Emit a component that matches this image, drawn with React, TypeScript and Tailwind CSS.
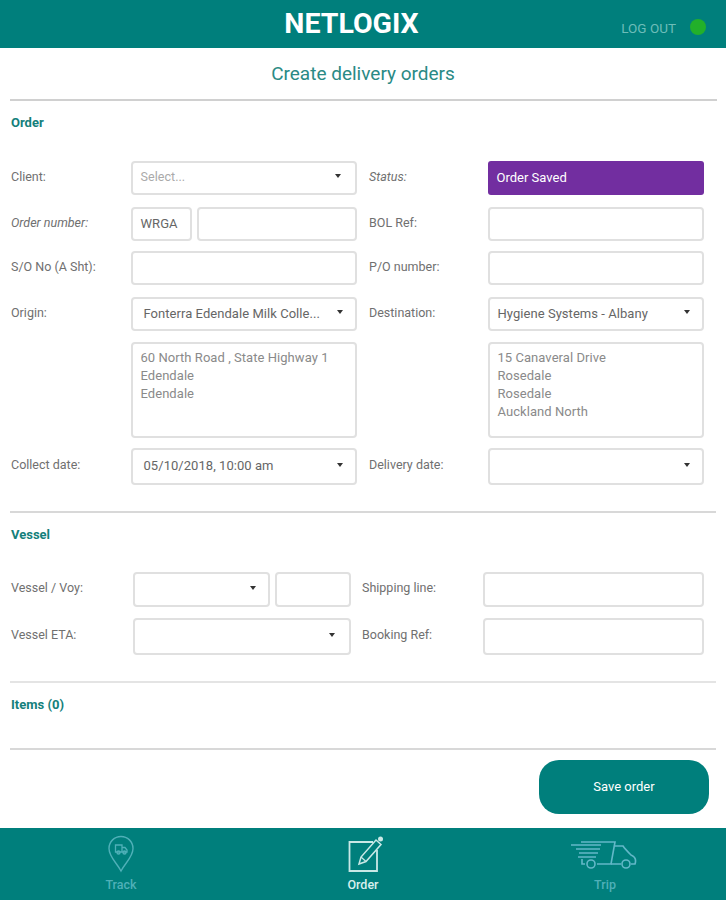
import type { ReactNode } from "react"

function Caret() {
  return <span className="ml-auto w-0 h-0 border-x-[3px] border-x-transparent border-t-[4px] border-t-[#333] -translate-y-[2px]" />
}

// no text colour here: each box passes its own so the classes don't fight
function Box({ className = "", children }: { className?: string; children?: ReactNode }) {
  return (
    <div className={`flex items-center border-2 border-[#e0e0e0] rounded-[4px] bg-white tracking-[0.05px] ${className}`}>
      {children}
    </div>
  )
}

function Label({ children, italic }: { children: ReactNode; italic?: boolean }) {
  return <div className={`text-[12.5px] text-[#707070] -translate-y-[1px] ${italic ? "italic" : ""}`}>{children}</div>
}

function Heading({ children }: { children: ReactNode }) {
  return <div className="text-[13px] leading-[16px] font-bold text-[#14807b]">{children}</div>
}

function Row({ className = "", left, right, leftLabel, rightLabel, leftItalic, rightItalic }: {
  className?: string
  left: ReactNode
  right: ReactNode
  leftLabel?: string
  rightLabel?: string
  leftItalic?: boolean
  rightItalic?: boolean
}) {
  return (
    <div className={`grid grid-cols-[119.5px_226.5px_130.5px_216px] items-center ${className}`}>
      <Label italic={leftItalic}>{leftLabel}</Label>
      <div className="flex h-full gap-[5px]">{left}</div>
      <div className="pl-[12px]"><Label italic={rightItalic}>{rightLabel}</Label></div>
      <div className="flex h-full">{right}</div>
    </div>
  )
}

function VesselRow({ className = "", label, rightLabel, left }: { className?: string; label: string; rightLabel: string; left: ReactNode }) {
  return (
    <div className={`grid grid-cols-[121.5px_218.5px_131.5px_221px] items-center ${className}`}>
      <Label>{label}</Label>
      <div className="flex h-full gap-[5px]">{left}</div>
      <div className="pl-[11px]"><Label>{rightLabel}</Label></div>
      <Box className="h-full" />
    </div>
  )
}

function TrackIcon() {
  return (
    <svg width="28" height="38" viewBox="0 0 28 38" fill="none" stroke="#4fb0b8" strokeWidth="1.4">
      <path d="M14 36 C10 28 2 22 2 13.5 C2 6.5 7.5 1.5 14 1.5 C20.5 1.5 26 6.5 26 13.5 C26 22 18 28 14 36 Z" />
      <path d="M8.5 10 H15 V17 H8.5 Z M15 12.5 H18 L20 15 V17 H15" strokeWidth="1.3" />
      <circle cx="11.5" cy="17.5" r="1.5" />
      <circle cx="17.5" cy="17.5" r="1.5" />
    </svg>
  )
}

function OrderIcon() {
  return (
    <svg width="38" height="38" viewBox="0 0 38 38" fill="none" stroke="#c9e8e6" strokeWidth="1.8">
      <path d="M26 7 H2.5 V36 H30 V15" />
      <path d="M12 29 L14 22 L29 5 L34 9.5 L19 26.5 Z" strokeWidth="1.5" />
      <path d="M14 22 L19 26.5" strokeWidth="1.2" />
      <circle cx="33.5" cy="4" r="2.5" fill="#c9e8e6" stroke="none" />
    </svg>
  )
}

function TripIcon() {
  return (
    <svg width="66" height="32" viewBox="0 0 66 32" fill="none" stroke="#63b8c8" strokeWidth="1.6">
      <path d="M0 7 H30 M5 11 H29 M8 15 H27 M7 19 H25" />
      <path d="M10 4 H44 L40 26 H26" />
      <path d="M11 21 V26 H14" />
      <path d="M44 8 H52 C54 11 56 13 60 17 C65 19 65 23 64 26 H60 M50 26 H40" />
      <circle cx="20" cy="26" r="4" />
      <circle cx="55" cy="26" r="4" />
    </svg>
  )
}

export default function App() {
  return (
    <div className="w-[726px] h-[900px] flex flex-col bg-white font-['Roboto',sans-serif] overflow-hidden">
      <header className="h-[48px] shrink-0 bg-[#007f7c] flex items-center relative">
        <div className="w-full text-center text-[28.5px] font-bold text-white pr-[23px]">NETLOGIX</div>
        <div className="absolute right-[20px] top-[17px] flex items-center">
          <span className="text-[13.5px] text-[#6dbdb9] mr-[14px] translate-y-[1px]">LOG OUT</span>
          <span className="w-[16px] h-[16px] rounded-full bg-[#22b02a]" />
        </div>
      </header>

      <div className="h-[51px] shrink-0 flex items-center justify-center text-[19px] text-[#2a8a85] translate-y-[1px]">Create delivery orders</div>

      <main className="flex-1 flex flex-col px-[10px]">
        <hr className="border-t-2 border-[#d0d0d0] w-[707px]" />

        <div className="pl-[1px]">
          <div className="mt-[14px]"><Heading>Order</Heading></div>

          <Row className="mt-[30px] h-[34px]" leftLabel="Client:" rightLabel="Status:" rightItalic
            left={<Box className="w-full pl-[8px] pr-[14px] text-[12.5px] text-[#aaa]"><span className="-translate-y-[1px]">Select...</span><Caret /></Box>}
            right={<div className="w-full flex items-center pl-[9px] rounded-[3px] bg-[#722ea0] text-[13px] text-white">Order Saved</div>} />

          <Row className="mt-[12px] h-[34px]" leftLabel="Order number:" leftItalic rightLabel="BOL Ref:"
            left={<><Box className="w-[61px] pl-[8px] text-[13px] text-[#666]">WRGA</Box><Box className="flex-1" /></>}
            right={<Box className="w-full" />} />

          <Row className="mt-[10px] h-[34px]" leftLabel="S/O No (A Sht):" rightLabel="P/O number:"
            left={<Box className="w-full" />}
            right={<Box className="w-full" />} />

          <Row className="mt-[12px] h-[34px]" leftLabel="Origin:" rightLabel="Destination:"
            left={<Box className="w-full pl-[11px] pr-[12px] text-[13px] text-[#666]">Fonterra Edendale Milk Colle...<Caret /></Box>}
            right={<Box className="w-full pl-[8px] pr-[12px] text-[13px] text-[#666]">Hygiene Systems - Albany<Caret /></Box>} />

          <Row className="mt-[11px] h-[96px]"
            left={<Box className="w-full items-start pl-[8px] pt-[5px] text-[13px] leading-[18px] text-[#8a8a8a]"><div>60 North Road , State Highway 1<br />Edendale<br />Edendale</div></Box>}
            right={<Box className="w-full items-start pl-[8px] pt-[5px] text-[13px] leading-[18px] text-[#8a8a8a]"><div>15 Canaveral Drive<br />Rosedale<br />Rosedale<br />Auckland North</div></Box>} />

          <Row className="mt-[10px] h-[37px]" leftLabel="Collect date:" rightLabel="Delivery date:"
            left={<Box className="w-full pl-[11px] pr-[12px] text-[13px] text-[#666]"><span className="-translate-y-[1px]">05/10/2018, 10:00 am</span><Caret /></Box>}
            right={<Box className="w-full pr-[12px]"><Caret /></Box>} />
        </div>

        <hr className="mt-[26px] border-t-2 border-[#d8d8d8] w-[706px]" />

        <div className="pl-[1px]">
          <div className="mt-[14px]"><Heading>Vessel</Heading></div>

          <VesselRow className="mt-[29px] h-[35px]" label="Vessel / Voy:" rightLabel="Shipping line:"
            left={<><Box className="w-[138px] pr-[12px]"><Caret /></Box><Box className="w-[76px]" /></>} />

          <VesselRow className="mt-[11px] h-[37px]" label="Vessel ETA:" rightLabel="Booking Ref:"
            left={<Box className="w-[218px] pr-[14px]"><Caret /></Box>} />
        </div>

        <hr className="mt-[26px] border-t-2 border-[#e4e4e4] w-[706px]" />

        <div className="mt-[14px] pl-[1px]"><Heading>Items (0)</Heading></div>

        <hr className="mt-[35px] border-t-2 border-[#d8d8d8] w-[706px]" />

        <div className="mt-[10px] pr-[7px] flex justify-end">
          <button className="w-[170px] h-[54px] rounded-[20px] bg-[#007f7c] text-[13px] text-white">Save order</button>
        </div>
      </main>

      <nav className="h-[72px] shrink-0 bg-[#007f7c] grid grid-cols-3 text-[12.5px] font-medium">
        <div className="flex flex-col items-center pt-[7px]">
          <div className="h-[38px]"><TrackIcon /></div>
          <span className="mt-[3px] text-[#4fb0b8]">Track</span>
        </div>
        <div className="flex flex-col items-center pt-[7px]">
          <div className="h-[38px] translate-x-[3px]"><OrderIcon /></div>
          <span className="mt-[3px] text-[#d6efed]">Order</span>
        </div>
        <div className="flex flex-col items-center pt-[10px]">
          <div className="h-[35px] -translate-x-[1px]"><TripIcon /></div>
          <span className="mt-[3px] text-[#4fb0b8]">Trip</span>
        </div>
      </nav>
    </div>
  )
}
